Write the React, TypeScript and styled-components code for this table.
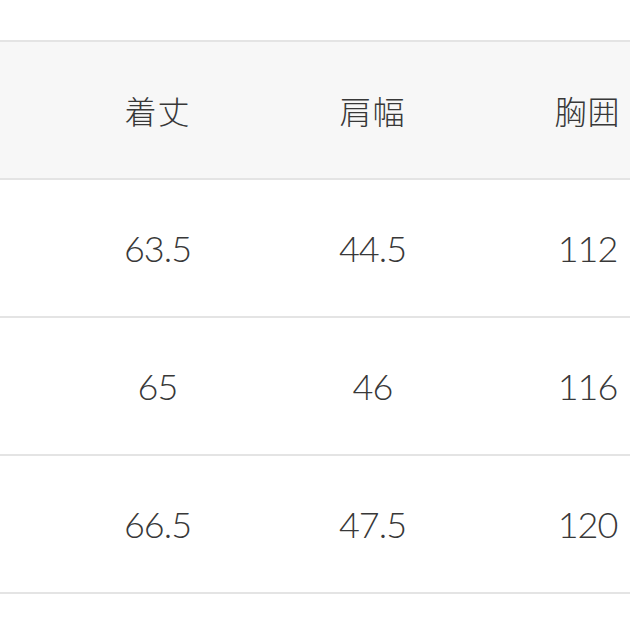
import React from "react";
import styled, { createGlobalStyle } from "styled-components";

const GlobalStyle = createGlobalStyle`
  html, body {
    margin: 0;
    padding: 0;
    background: #ffffff;
    overflow: hidden;
  }
`;

const Page = styled.div`
  width: 630px;
  height: 630px;
  overflow: hidden;
  padding-top: 40px;
  box-sizing: border-box;
`;

const Table = styled.div`
  display: grid;
  grid-template-columns: 50px repeat(3, 215px);
  width: 695px;
  border-top: 2px solid #e4e4e4;
`;

const Cell = styled.div<{ $head?: boolean }>`
  height: 136px;
  display: flex;
  align-items: center;
  justify-content: center;
  background: ${(p) => (p.$head ? "#f7f7f7" : "#ffffff")};
  border-bottom: 2px solid #e4e4e4;
  color: #383838;
  font-family: ${(p) =>
    p.$head
      ? '"Noto Sans CJK JP", sans-serif'
      : 'Lato, "Noto Sans", sans-serif'};
  font-weight: 300;
  font-size: ${(p) => (p.$head ? "32px" : "36px")};
  letter-spacing: ${(p) => (p.$head ? "1px" : "-1px")};
`;

const Caption = styled.div`
  margin-top: 30px;
  text-align: center;
  color: #cccccc;
  font-family: "Noto Sans CJK JP", sans-serif;
  font-size: 30px;
  letter-spacing: 6px;
`;

const header = ["", "着丈", "肩幅", "胸囲"];
const rows = [
  ["S", "63.5", "44.5", "112"],
  ["M", "65", "46", "116"],
  ["L", "66.5", "47.5", "120"],
];

export default function App() {
  return (
    <Page>
      <GlobalStyle />
      <Table>
        {header.map((h, i) => (
          <Cell key={`h${i}`} $head>
            {i === 0 ? "" : h}
          </Cell>
        ))}
        {rows.map((r, ri) =>
          r.map((c, ci) => <Cell key={`${ri}-${ci}`}>{ci === 0 ? "" : c}</Cell>)
        )}
      </Table>
      <Caption>【 注意事項 】</Caption>
    </Page>
  );
}
